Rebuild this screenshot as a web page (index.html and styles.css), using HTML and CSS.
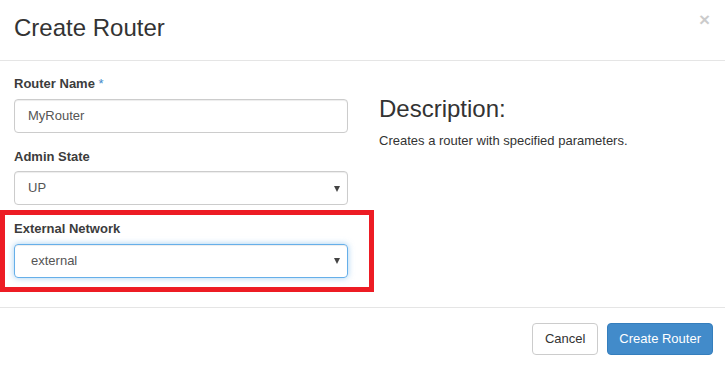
FILE: index.html
```html
<!DOCTYPE html>
<html lang="en">
<head>
<meta charset="utf-8">
<title>Create Router</title>
<link rel="stylesheet" href="styles.css">
</head>
<body>
<div class="modal">
  <div class="modal-header">
    <h4 class="modal-title">Create Router</h4>
    <span class="close">&times;</span>
  </div>
  <div class="modal-body">
    <div class="col-left">
      <div class="form-group">
        <label class="label">Router Name <span class="req">*</span></label>
        <div class="control">MyRouter</div>
      </div>
      <div class="form-group">
        <label class="label">Admin State</label>
        <div class="control select"><span>UP</span><span class="caret"></span></div>
      </div>
      <div class="form-group highlight">
        <label class="label">External Network</label>
        <div class="control select focus"><span class="ext">external</span><span class="caret"></span></div>
      </div>
    </div>
    <div class="col-right">
      <h3 class="desc-title">Description:</h3>
      <p class="desc">Creates a router with specified parameters.</p>
    </div>
  </div>
  <div class="modal-footer">
    <button class="btn btn-default">Cancel</button>
    <button class="btn btn-primary">Create Router</button>
  </div>
</div>
</body>
</html>
```

FILE: styles.css
```css
* { box-sizing: border-box; }
html, body {
  margin: 0;
  padding: 0;
  background: #fff;
}
body {
  font-family: "Liberation Sans", Arial, sans-serif;
  font-size: 13px;
  line-height: 1.42857;
  color: #333;
}
.modal {
  width: 725px;
}
.modal-header {
  display: flex;
  justify-content: space-between;
  align-items: flex-start;
  padding: 14px 15px 0 14px;
  height: 61px;
  border-bottom: 1px solid #e5e5e5;
}
.modal-title {
  margin: 0;
  font-size: 24px;
  font-weight: normal;
  line-height: 27px;
  color: #333;
}
.close {
  font-size: 19px;
  font-weight: bold;
  line-height: 1;
  color: #000;
  opacity: 0.2;
  margin-top: -4px;
}
.modal-body {
  display: grid;
  grid-template-columns: 334px 1fr;
  column-gap: 31px;
  padding: 14px 14px 0 14px;
  height: 247px;
  border-bottom: 1px solid #e5e5e5;
}
.form-group {
  margin-bottom: 15px;
}
.label {
  display: block;
  font-weight: bold;
  margin-bottom: 5px;
  color: #3c3c3c;
}
.req {
  color: #428bca;
  font-weight: normal;
}
.control {
  height: 34px;
  padding: 7px 13px;
  border: 1px solid #ccc;
  border-radius: 4px;
  color: #555;
  box-shadow: inset 0 1px 1px rgba(0,0,0,0.075);
  line-height: 18px;
}
.select {
  display: flex;
  justify-content: space-between;
  align-items: center;
  padding-right: 7px;
}
.ext { padding-left: 3px; }
.caret {
  width: 0;
  height: 0;
  border-left: 3.5px solid transparent;
  border-right: 3.5px solid transparent;
  border-top: 6px solid #444;
  margin-top: 1px;
}
.focus {
  border-color: #66afe9;
  box-shadow: inset 0 1px 1px rgba(0,0,0,0.075), 0 0 6px rgba(102,175,233,0.6);
}
.highlight {
  margin: -10px -26px 0 -14px;
  padding: 5px 21px 9px 9px;
  border: 5px solid #ed1c24;
}
.desc-title {
  margin: 21px 0 10px;
  font-size: 24px;
  font-weight: normal;
  line-height: 26px;
  color: #333;
}
.desc {
  margin: 0;
  color: #333;
}
.modal-footer {
  display: flex;
  justify-content: flex-end;
  gap: 9px;
  padding: 15px 12px 0 0;
}
.btn {
  font-family: "Liberation Sans", Arial, sans-serif;
  font-size: 13px;
  line-height: 18px;
  height: 32px;
  padding: 6px 12px;
  border-radius: 4px;
  border: 1px solid #ccc;
  background: #fff;
  color: #333;
}
.btn-primary {
  background: #428bca;
  border-color: #357ebd;
  color: #fff;
  padding: 6px 11px;
}
```
